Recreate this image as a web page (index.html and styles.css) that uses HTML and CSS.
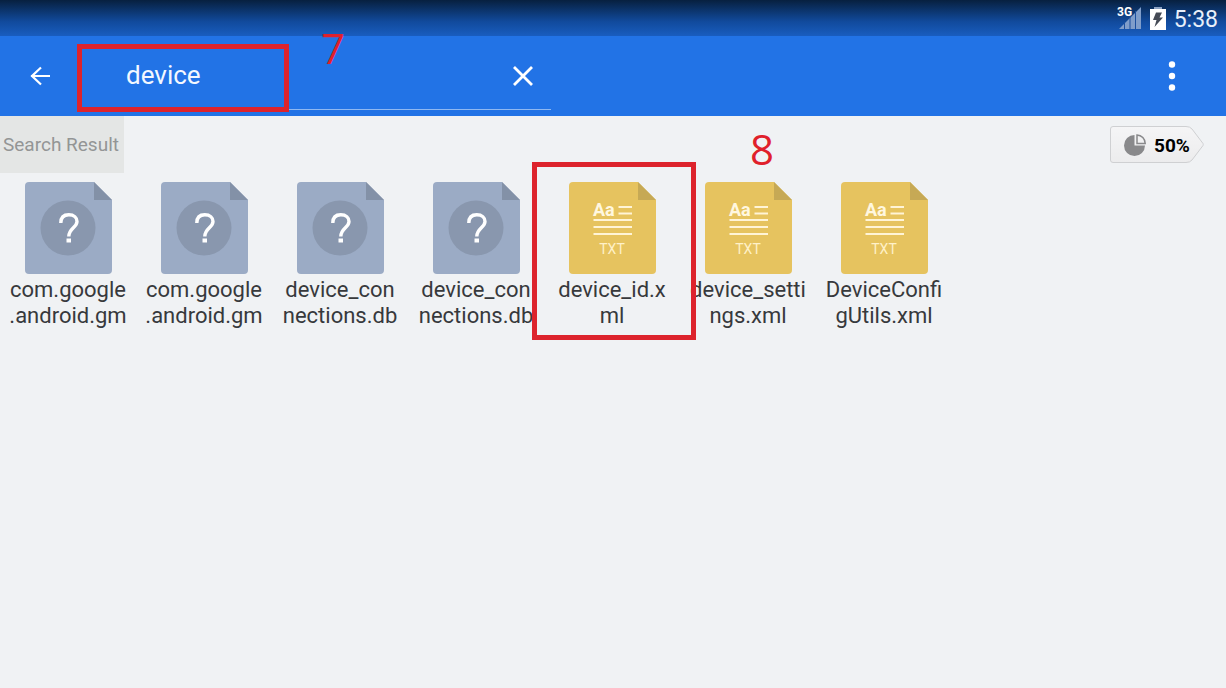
FILE: index.html
```html
<!DOCTYPE html>
<html lang="en">
<head>
<meta charset="utf-8">
<meta name="viewport" content="width=device-width, initial-scale=1">
<title>Search Result</title>
<link rel="stylesheet" href="styles.css">
</head>
<body>
<svg width="0" height="0" class="defs" aria-hidden="true">
  <symbol id="unknown" viewBox="0 0 87 92">
    <path fill="#9babc5" d="M4 0H69L87 18V88a4 4 0 0 1-4 4H4a4 4 0 0 1-4-4V4a4 4 0 0 1 4-4z"/>
    <path fill="#8391a7" d="M69 0L87 18H69z"/>
    <circle cx="43" cy="46" r="27.500" fill="#8997ae"/>
    <path fill="none" stroke="#fff" stroke-width="3.400" d="M35.800 41C35.800 35.500 39 32.800 43.800 32.800C49 32.800 52 35.600 52 39.500C52 45.500 43.800 46.500 43.800 54.500"/>
    <path fill="#fff" d="M41.500 56.500h4.500v4h-4.500z"/>
  </symbol>
  <symbol id="page" viewBox="0 0 87 92">
    <path fill="#e6c35f" d="M4 0H69L87 18V88a4 4 0 0 1-4 4H4a4 4 0 0 1-4-4V4a4 4 0 0 1 4-4z"/>
    <path fill="#c6a955" d="M69 0L87 18H69z"/>
    <path stroke="#fff4d6" stroke-width="2.200" d="M49.500 25H63M49.500 31.500H63M24.500 38H63M24.500 45H63M24.500 52H63"/>
  </symbol>
</svg>

<div class="status">
  <svg width="25" height="26" viewBox="0 0 25 26" role="img" aria-label="3G signal">
    <path fill="#7f9dca" d="M2 26L24 4V26z"/>
    <path stroke="#1c4f9e" stroke-width="1" d="M7.500 19v7M13 13v13M18.500 8v18"/>
    <text x="0" y="13" class="glyph-3g">3G</text>
  </svg>
  <svg width="16" height="23" viewBox="0 0 16 23" role="img" aria-label="Battery charging">
    <path fill="#8da3c4" d="M4 0h8v3H4z"/>
    <path fill="#fff" d="M0 2h16v21H0z"/>
    <path fill="#444a55" d="M6 5.500h6L9.500 10.500H13L4.500 20l2-7H3z"/>
  </svg>
  <time class="clock">5:38</time>
</div>

<header class="toolbar">
  <button class="icon-button back" aria-label="Back">
    <svg width="22" height="20" viewBox="0 0 22 20"><path fill="none" stroke="#fff" stroke-width="2.200" d="M21 10H2M12 1.500L3 10L12 18.500"/></svg>
  </button>
  <div class="search">
    <input class="search-input" type="text" value="device" aria-label="Search">
    <button class="icon-button" aria-label="Clear">
      <svg width="20" height="20" viewBox="0 0 20 20"><path stroke="#fff" stroke-width="2.800" d="M1 1L19 19M19 1L1 19"/></svg>
    </button>
  </div>
  <button class="icon-button more" aria-label="More options">
    <svg width="8" height="30" viewBox="0 0 8 30"><g fill="#fff"><circle cx="4" cy="3.500" r="3.200"/><circle cx="4" cy="15" r="3.200"/><circle cx="4" cy="26.500" r="3.200"/></g></svg>
  </button>
</header>

<main>
  <div class="pathbar">
    <h1 class="crumb">Search Result</h1>
    <button class="usage">
      <svg class="usage-shape" width="94" height="38" viewBox="0 0 94 38" aria-hidden="true">
        <defs><linearGradient id="tag" x2="0" y2="1"><stop stop-color="#f5f5f6"/><stop offset="1" stop-color="#ececed"/></linearGradient></defs>
        <path fill="url(#tag)" stroke="#cfd0d2" d="M3 .5H76Q80 .5 82 3L93 17.500Q93.500 18.500 93 19.500L82 34Q80 36.500 76 36.500H3Q.5 36.500 .5 34V3Q.5 .5 3 .5z"/>
      </svg>
      <svg class="usage-pie" width="22" height="22" viewBox="0 0 22 22" aria-hidden="true">
        <path fill="#89898b" d="M10.500 1V11.500H21A10.500 10.500 0 1 1 10.500 1z"/>
        <path fill="none" stroke="#89898b" stroke-width="1.500" d="M13 1V9.500H21.200A8.500 8.500 0 0 0 13 1z"/>
      </svg>
      <span class="usage-value">50%</span>
    </button>
  </div>

  <ul class="files">
    <li class="file"><svg class="file-icon"><use href="#unknown"/></svg><span>com.google<br>.android.gm</span></li>
    <li class="file"><svg class="file-icon"><use href="#unknown"/></svg><span>com.google<br>.android.gm</span></li>
    <li class="file"><svg class="file-icon"><use href="#unknown"/></svg><span>device_con<br>nections.db</span></li>
    <li class="file"><svg class="file-icon"><use href="#unknown"/></svg><span>device_con<br>nections.db</span></li>
    <li class="file"><svg class="file-icon"><use href="#page"/><text x="24" y="34" class="glyph-aa">Aa</text><text x="43" y="72" class="glyph-txt">TXT</text></svg><span>device_id.x<br>ml</span></li>
    <li class="file"><svg class="file-icon"><use href="#page"/><text x="24" y="34" class="glyph-aa">Aa</text><text x="43" y="72" class="glyph-txt">TXT</text></svg><span>device_setti<br>ngs.xml</span></li>
    <li class="file"><svg class="file-icon"><use href="#page"/><text x="24" y="34" class="glyph-aa">Aa</text><text x="43" y="72" class="glyph-txt">TXT</text></svg><span>DeviceConfi<br>gUtils.xml</span></li>
  </ul>
</main>

<div class="mark-box mark-search"></div>
<div class="mark-box mark-file"></div>
<span class="mark-label label-search">7</span>
<span class="mark-label label-file">8</span>
</body>
</html>
```

FILE: styles.css
```css
* { box-sizing: border-box; }
body {
  margin: 0;
  min-height: 100vh;
  position: relative;
  background: #f0f2f4;
  color: #37393c;
  font-family: Roboto, sans-serif;
}
button { border: 0; padding: 0; background: none; font: inherit; color: inherit; }
svg { display: block; flex: none; }
.defs { position: absolute; }

.status {
  display: flex;
  align-items: center;
  justify-content: flex-end;
  gap: 8px;
  height: 36px;
  padding-right: 8px;
  background: linear-gradient(#07203f, #114a9c 60%, #195dbf);
}
.status svg:first-child { margin-bottom: 4px; }
.clock { padding-top: 3px; color: #e8eff9; font-size: 23px; line-height: 33px; }
.glyph-3g { fill: #fff; font: bold 12px Roboto, sans-serif; }
.glyph-aa { fill: #fff7df; font: bold 18px Roboto, sans-serif; }
.glyph-txt { fill: #fff1c8; font: 14px Roboto, sans-serif; text-anchor: middle; }

.toolbar { display: flex; align-items: center; height: 80px; background: #2273e6; }
.icon-button { display: flex; align-items: center; justify-content: center; width: 56px; height: 56px; }
.back { width: 80px; }
.search {
  display: flex;
  align-items: center;
  width: 471px;
  height: 68px;
  border-bottom: 1px solid #8fb8f2;
}
.search-input {
  flex: 1;
  min-width: 0;
  height: 56px;
  border: 0;
  padding: 0 0 2px 46px;
  outline: 0;
  background: none;
  color: #f3f8ff;
  font: 26px Roboto, sans-serif;
}
.more { width: 48px; margin-left: auto; margin-right: 30px; }

.pathbar { display: flex; align-items: center; justify-content: space-between; height: 57px; padding-right: 22px; }
.crumb {
  margin: 0;
  padding: 0 5px 0 3px;
  background: #e4e6e5;
  color: #939595;
  font-size: 19px;
  font-weight: 400;
  line-height: 57px;
}
.usage { position: relative; display: flex; align-items: center; gap: 8px; width: 94px; height: 38px; padding-left: 14px; }
.usage-shape { position: absolute; inset: 0; }
.usage-pie, .usage-value { position: relative; }
.usage-value { padding-top: 2px; color: #000; font-size: 19px; font-weight: 700; line-height: 38px; }

.files { display: flex; flex-wrap: wrap; margin: 0; padding: 9px 0; list-style: none; }
.file {
  display: flex;
  flex-direction: column;
  align-items: center;
  gap: 3px;
  width: 136px;
  font-size: 22px;
  line-height: 26px;
  text-align: center;
}
.file-icon { width: 87px; height: 92px; }

.mark-box { position: absolute; border: 5px solid #dd232c; }
.mark-search { left: 77px; top: 44px; width: 212px; height: 68px; }
.mark-file { left: 532px; top: 162px; width: 164px; height: 178px; }
.mark-label { position: absolute; color: #e0202b; font: 42px/48px "Open Sans", sans-serif; }
.label-search { left: 321px; top: 24px; }
.label-file { left: 750px; top: 125px; }
```
